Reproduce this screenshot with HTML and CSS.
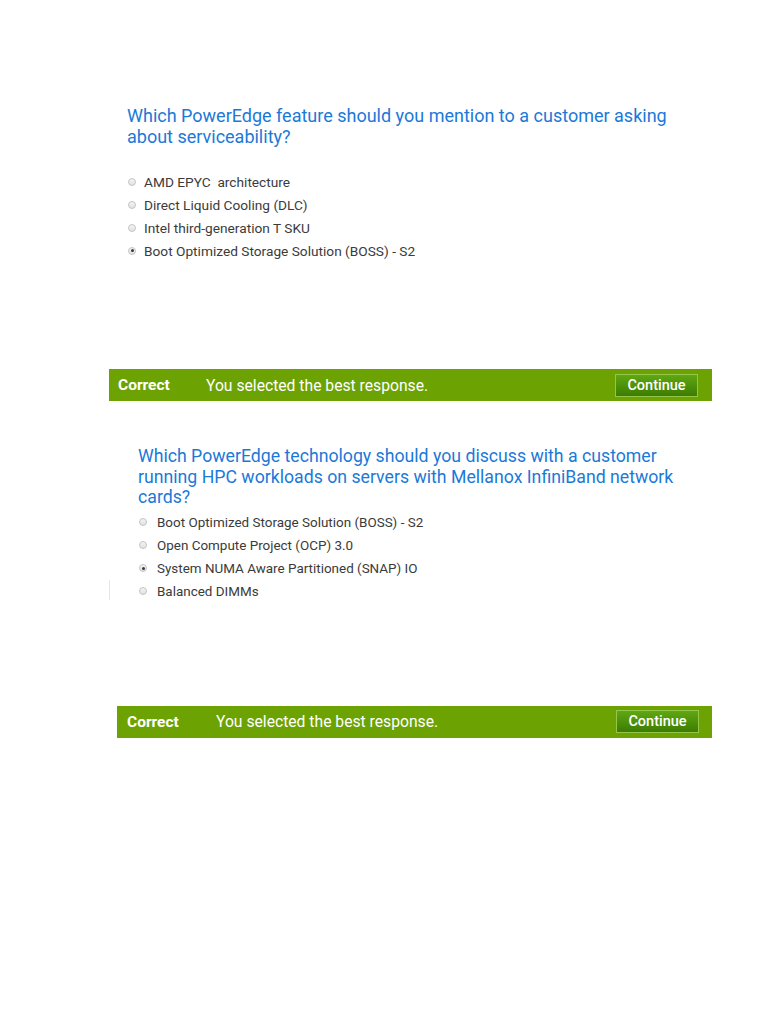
FILE: index.html
```html
<!DOCTYPE html>
<html lang="en">
<head>
    <meta charset="UTF-8">
    <meta name="viewport" content="width=device-width, initial-scale=1.0">
    <title>PowerEdge Knowledge Check</title>
    <link rel="stylesheet" href="styles.css">
</head>
<body>
    <div class="page">
        <div class="question-block first">
            <h2 class="question">Which PowerEdge feature should you mention to a customer asking about serviceability?</h2>
            <ul class="options">
                <li class="option"><span class="radio"></span>AMD EPYC&nbsp; architecture</li>
                <li class="option"><span class="radio"></span>Direct Liquid Cooling (DLC)</li>
                <li class="option"><span class="radio"></span>Intel third-generation T SKU</li>
                <li class="option"><span class="radio checked"></span>Boot Optimized Storage Solution (BOSS) - S2</li>
            </ul>
        </div>

        <div class="feedback first">
            <span class="feedback-title">Correct</span>
            <span class="feedback-text">You selected the best response.</span>
            <button class="continue-btn">Continue</button>
        </div>

        <div class="question-block second">
            <h2 class="question">Which PowerEdge technology should you discuss with a customer running HPC workloads on servers with Mellanox InfiniBand network cards?</h2>
            <ul class="options">
                <li class="option"><span class="radio"></span>Boot Optimized Storage Solution (BOSS) - S2</li>
                <li class="option"><span class="radio"></span>Open Compute Project (OCP) 3.0</li>
                <li class="option"><span class="radio checked"></span>System NUMA Aware Partitioned (SNAP) IO</li>
                <li class="option scan-edge"><span class="radio"></span>Balanced DIMMs</li>
            </ul>
        </div>

        <div class="feedback second">
            <span class="feedback-title">Correct</span>
            <span class="feedback-text">You selected the best response.</span>
            <button class="continue-btn">Continue</button>
        </div>
    </div>
</body>
</html>
```
FILE: styles.css
```css
body {
    margin: 0;
    background: #ffffff;
    font-family: Roboto, "Liberation Sans", Arial, sans-serif;
}

.page {
    padding-top: 105px;
    padding-bottom: 200px;
}

.question-block.first {
    margin-left: 127px;
    width: 570px;
}

.question-block.second {
    margin-left: 138px;
    width: 570px;
    margin-top: 45px;
}

.question {
    margin: 0;
    font-size: 18px;
    font-weight: 400;
    line-height: 21px;
    color: #1b79d8;
}

.second .question {
    font-size: 17.7px;
    line-height: 20.5px;
}

.options {
    list-style: none;
    margin: 23px 0 0;
    padding: 0;
}

.second .options {
    margin-top: 3px;
}

.option {
    position: relative;
    display: flex;
    align-items: center;
    height: 23px;
    font-size: 13.7px;
    color: #3b3b3b;
}

.second .option {
    font-size: 13.45px;
}

.radio {
    width: 6px;
    height: 6px;
    margin: 0 8px 0 1px;
    border: 1px solid #c4c4c4;
    border-radius: 50%;
    background: linear-gradient(#f4f4f4, #e2e2e2);
    box-sizing: content-box;
    display: inline-flex;
    align-items: center;
    justify-content: center;
}

.second .radio {
    margin-right: 10px;
}

.radio.checked::after {
    content: "";
    width: 3px;
    height: 3px;
    border-radius: 50%;
    background: #2f3b4a;
}

.scan-edge::before {
    content: "";
    position: absolute;
    left: -29px;
    top: 0;
    height: 20px;
    border-left: 1px solid #e6e6e6;
}

.feedback {
    display: flex;
    align-items: center;
    height: 32px;
    background: #6ca303;
    color: #ffffff;
    box-sizing: border-box;
}

.feedback.first {
    margin: 107px 0 0 109px;
    width: 603px;
    padding: 0 14px 0 9px;
}

.feedback.second {
    margin: 103px 0 0 117px;
    width: 595px;
    padding: 0 13px 0 10px;
}

.feedback-title {
    font-weight: 700;
    font-size: 15.5px;
    width: 88px;
}

.second .feedback-title {
    width: 89px;
}

.feedback-text {
    font-size: 15.7px;
    flex: 1;
}

.continue-btn {
    height: 23px;
    width: 83px;
    padding: 0;
    border: 1px solid #93c64a;
    background: linear-gradient(#5fa712, #3d7c02);
    color: #ffffff;
    font-family: inherit;
    font-size: 14.5px;
    font-weight: 500;
    cursor: pointer;
}
```
